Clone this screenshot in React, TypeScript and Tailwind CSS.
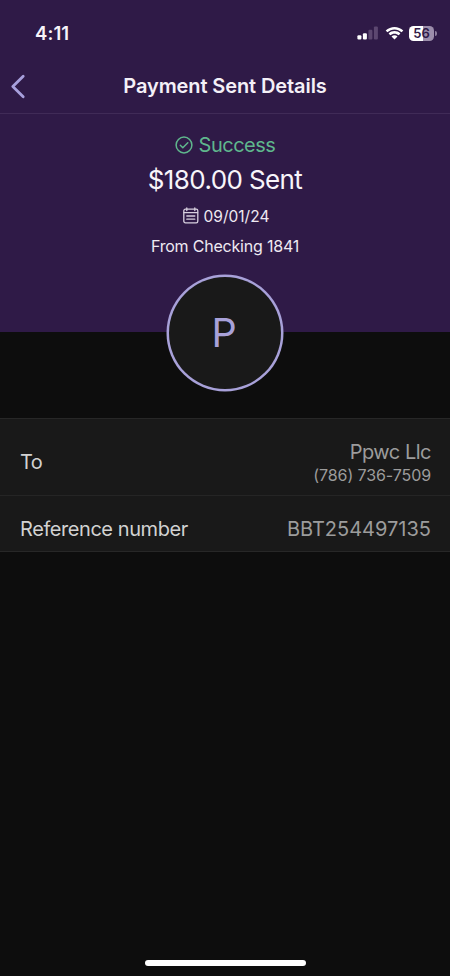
function StatusBar() {
  return (
    <div className="flex h-[60px] items-start justify-between pl-[35px] pr-[13px] pt-[22px]">
      <span className="text-[18.5px] font-semibold leading-[22px] tracking-[0.1px] text-[#f7f4fa]">4:11</span>
      <div className="flex h-[22px] items-center">
        <svg className="mr-[6px]" width="22" height="14" viewBox="0 0 22 14">
          <rect x="0.4" y="9.2" width="4" height="4.3" rx="1.1" fill="#fff" />
          <rect x="5.9" y="7.2" width="4" height="6.3" rx="1.1" fill="#fff" />
          <rect x="11.4" y="3.8" width="4" height="9.7" rx="1.1" fill="#5c4770" />
          <rect x="16.9" y="0.5" width="4" height="13" rx="1.1" fill="#5c4770" />
        </svg>
        <svg className="mr-[5px]" width="19" height="14" viewBox="0 0 19 14">
          <path d="M.7 4.5C5.6-.3 13.4-.3 18.3 4.5L16.6 6.3C12.6 2.4 6.4 2.4 2.4 6.3Z" fill="#fff" />
          <path d="M3.6 7.5C6.9 4.3 12.1 4.3 15.4 7.5L13.7 9.3C11.3 7.1 7.7 7.1 5.3 9.3Z" fill="#fff" />
          <path d="M6.5 10.5C8.2 8.9 10.8 8.9 12.5 10.5L9.5 13.5Z" fill="#fff" />
        </svg>
        <div className="flex h-[15px] w-[25px] items-center justify-center rounded-[4.5px] bg-[linear-gradient(90deg,#fff_56%,#9c8dab_56%)] text-[13px] font-semibold leading-[15px] text-[#2f1a47]">56</div>
        <div className="ml-px h-[5px] w-[2px] rounded-r-full bg-[#8d7d9d]" />
      </div>
    </div>
  );
}

function NavBar() {
  return (
    <div className="grid h-[54px] grid-cols-[40px_1fr_40px] border-b border-[#402b57]">
      <svg className="ml-[10px] mt-[14px]" width="16" height="25" viewBox="0 0 16 25" fill="none" stroke="#a8a0dd" strokeWidth="2.8" strokeLinecap="round" strokeLinejoin="round">
        <path d="M13.2 2.2 2.8 12.5 13.2 22.7" />
      </svg>
      <h1 className="mt-[14px] whitespace-nowrap text-center text-[20px] font-semibold leading-[25px] tracking-[-0.1px] text-[#f4f0f7]">Payment Sent Details</h1>
    </div>
  );
}

function Summary() {
  return (
    <div className="flex h-[218px] flex-col items-center whitespace-nowrap">
      <div className="mt-[18px] flex h-[26px] items-center text-[#5fb78d]">
        <svg className="mr-[6px]" width="18" height="18" viewBox="0 0 18 18" fill="none" stroke="currentColor" strokeWidth="1.5" strokeLinecap="round" strokeLinejoin="round">
          <circle cx="9" cy="9" r="7.9" />
          <path d="m5.3 9.3 2.5 2.5 5-5" />
        </svg>
        <span className="text-[20px] leading-[26px] tracking-[-0.5px]">Success</span>
      </div>
      <div className="mt-[5px] text-[26px] leading-[34px] tracking-[-0.6px] text-[#f8f5fa]">$180.00 Sent</div>
      <div className="mt-[10px] flex h-[20px] items-center pl-[2px] text-[#eee9f2]">
        <svg className="mr-[5px] mt-[-3px]" width="16" height="17" viewBox="0 0 16 17" fill="none" stroke="#d8d0df" strokeWidth="1.3" strokeLinecap="round">
          <rect x="0.8" y="2.2" width="14" height="13.6" rx="1.6" />
          <path d="M3.8 0.9v2.6M11.8 0.9v2.6M1 5.6h13.6M3.8 9h8M3.8 12.2h8" />
        </svg>
        <span className="text-[15.5px] leading-[20px]">09/01/24</span>
      </div>
      <div className="mt-[9px] text-[16px] leading-[20px] tracking-[-0.2px] text-[#eee9f2]">From Checking 1841</div>
    </div>
  );
}

export default function App() {
  return (
    <div className="flex h-[976px] w-[450px] flex-col overflow-hidden bg-[#0d0d0d] font-['Inter','Liberation_Sans',sans-serif]">
      <header className="h-[332px] shrink-0 bg-[#2f1a47]">
        <StatusBar />
        <NavBar />
        <Summary />
      </header>
      <div className="flex h-[86px] shrink-0 justify-center">
        <div className="-mt-[55px] flex size-[112px] items-center justify-center rounded-full bg-[#191919] pr-[2px] pt-[2px] text-[39.5px] text-[#a8a1d9] shadow-[0_0_0_2.5px_#a8a1d9]">P</div>
      </div>
      <main className="border-y border-[#272727] bg-[#191919] text-[20px] text-[#d2d2d2]">
        <div className="flex h-[77px] items-center justify-between border-b border-[#252525] pl-5 pr-[19px] pt-[9px]">
          <span className="leading-[26px] tracking-[-0.6px]">To</span>
          <div className="text-right text-[#9c9c9c]">
            <div className="leading-[26px] tracking-[-0.5px]">Ppwc Llc</div>
            <div className="text-[16px] leading-[20px] tracking-[-0.1px]">(786) 736-7509</div>
          </div>
        </div>
        <div className="flex h-[55px] items-center justify-between pl-5 pr-[19px] pt-[10px] leading-[26px]">
          <span className="tracking-[-0.43px]">Reference number</span>
          <span className="text-[#9c9c9c]">BBT254497135</span>
        </div>
      </main>
      <div className="mb-[10px] mt-auto h-[6px] w-[161px] self-center rounded-full bg-white" />
    </div>
  );
}
